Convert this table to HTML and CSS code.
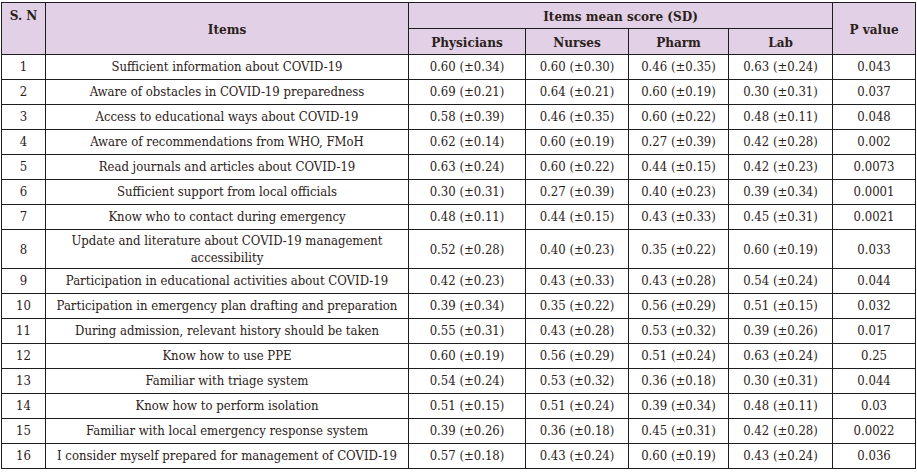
FILE: index.html
```html
<!DOCTYPE html>
<html>
<head>
<meta charset="utf-8">
<link rel="stylesheet" href="styles.css">
</head>
<body>
<table class="tbl">
<colgroup>
<col class="c-sn"><col class="c-item"><col class="c-phy"><col class="c-nur"><col class="c-pha"><col class="c-lab"><col class="c-p">
</colgroup>
<thead>
<tr class="h1"><th class="sn-h" rowspan="2">S. N</th><th rowspan="2">Items</th><th colspan="4">Items mean score (SD)</th><th rowspan="2">P value</th></tr>
<tr class="h2"><th>Physicians</th><th>Nurses</th><th>Pharm</th><th>Lab</th></tr>
</thead>
<tbody>
<tr><td>1</td><td>Sufficient information about COVID-19</td><td>0.60 (±0.34)</td><td>0.60 (±0.30)</td><td>0.46 (±0.35)</td><td>0.63 (±0.24)</td><td>0.043</td></tr>
<tr><td>2</td><td>Aware of obstacles in COVID-19 preparedness</td><td>0.69 (±0.21)</td><td>0.64 (±0.21)</td><td>0.60 (±0.19)</td><td>0.30 (±0.31)</td><td>0.037</td></tr>
<tr><td>3</td><td>Access to educational ways about COVID-19</td><td>0.58 (±0.39)</td><td>0.46 (±0.35)</td><td>0.60 (±0.22)</td><td>0.48 (±0.11)</td><td>0.048</td></tr>
<tr><td>4</td><td>Aware of recommendations from WHO, FMoH</td><td>0.62 (±0.14)</td><td>0.60 (±0.19)</td><td>0.27 (±0.39)</td><td>0.42 (±0.28)</td><td>0.002</td></tr>
<tr><td>5</td><td>Read journals and articles about COVID-19</td><td>0.63 (±0.24)</td><td>0.60 (±0.22)</td><td>0.44 (±0.15)</td><td>0.42 (±0.23)</td><td>0.0073</td></tr>
<tr><td>6</td><td>Sufficient support from local officials</td><td>0.30 (±0.31)</td><td>0.27 (±0.39)</td><td>0.40 (±0.23)</td><td>0.39 (±0.34)</td><td>0.0001</td></tr>
<tr><td>7</td><td>Know who to contact during emergency</td><td>0.48 (±0.11)</td><td>0.44 (±0.15)</td><td>0.43 (±0.33)</td><td>0.45 (±0.31)</td><td>0.0021</td></tr>
<tr class="tall"><td>8</td><td>Update and literature about COVID-19 management accessibility</td><td>0.52 (±0.28)</td><td>0.40 (±0.23)</td><td>0.35 (±0.22)</td><td>0.60 (±0.19)</td><td>0.033</td></tr>
<tr><td>9</td><td>Participation in educational activities about COVID-19</td><td>0.42 (±0.23)</td><td>0.43 (±0.33)</td><td>0.43 (±0.28)</td><td>0.54 (±0.24)</td><td>0.044</td></tr>
<tr><td>10</td><td>Participation in emergency plan drafting and preparation</td><td>0.39 (±0.34)</td><td>0.35 (±0.22)</td><td>0.56 (±0.29)</td><td>0.51 (±0.15)</td><td>0.032</td></tr>
<tr><td>11</td><td>During admission, relevant history should be taken</td><td>0.55 (±0.31)</td><td>0.43 (±0.28)</td><td>0.53 (±0.32)</td><td>0.39 (±0.26)</td><td>0.017</td></tr>
<tr><td>12</td><td>Know how to use PPE</td><td>0.60 (±0.19)</td><td>0.56 (±0.29)</td><td>0.51 (±0.24)</td><td>0.63 (±0.24)</td><td>0.25</td></tr>
<tr><td>13</td><td>Familiar with triage system</td><td>0.54 (±0.24)</td><td>0.53 (±0.32)</td><td>0.36 (±0.18)</td><td>0.30 (±0.31)</td><td>0.044</td></tr>
<tr><td>14</td><td>Know how to perform isolation</td><td>0.51 (±0.15)</td><td>0.51 (±0.24)</td><td>0.39 (±0.34)</td><td>0.48 (±0.11)</td><td>0.03</td></tr>
<tr><td>15</td><td>Familiar with local emergency response system</td><td>0.39 (±0.26)</td><td>0.36 (±0.18)</td><td>0.45 (±0.31)</td><td>0.42 (±0.28)</td><td>0.0022</td></tr>
<tr><td>16</td><td>I consider myself prepared for management of COVID-19</td><td>0.57 (±0.18)</td><td>0.43 (±0.24)</td><td>0.60 (±0.19)</td><td>0.43 (±0.24)</td><td>0.036</td></tr>
</tbody>
</table>
</body>
</html>
```
FILE: styles.css
```css
html, body {
  margin: 0;
  padding: 0;
  background: #ffffff;
}
body {
  padding: 2px 0 0 1px;
  font-family: "DejaVu Serif Condensed", "DejaVu Serif", serif;
  font-stretch: condensed;
  font-size: 13px;
  color: #2b2119;
}
.tbl {
  border-collapse: collapse;
  table-layout: fixed;
  width: 914px;
}
.c-sn { width: 44px; }
.c-item { width: 363px; }
.c-phy { width: 117px; }
.c-nur { width: 103px; }
.c-pha { width: 100px; }
.c-lab { width: 104px; }
.c-p { width: 83px; }
.tbl th, .tbl td {
  border: 1px solid #1e1e1e;
  text-align: center;
  vertical-align: middle;
  padding: 0 6px;
  line-height: 16px;
}
.tbl th {
  background: #e2d0e6;
  font-weight: bold;
  font-size: 13.4px;
  height: 25px;
}
.tbl th.sn-h {
  vertical-align: top;
  padding-top: 4px;
}
.tbl td {
  height: 24px;
  padding-top: 0;
  padding-bottom: 0;
}
.tbl tr.tall td {
  height: 38px;
  line-height: 17px;
}
```
